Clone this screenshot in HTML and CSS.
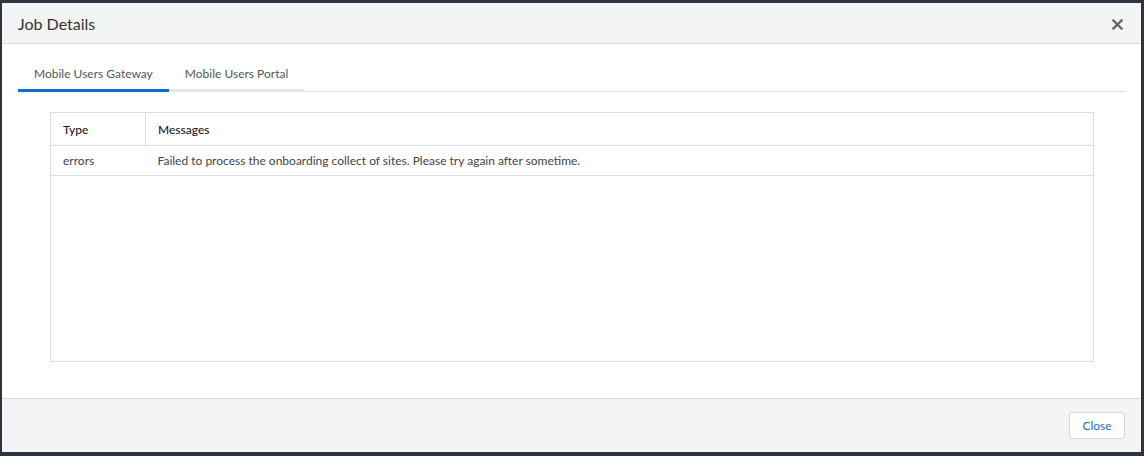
FILE: index.html
```html
<!DOCTYPE html>
<html>
<head>
<meta charset="utf-8">
<link rel="stylesheet" href="styles.css">
</head>
<body>
<div class="modal">
  <div class="modal-header">
    <h1 class="modal-title">Job Details</h1>
    <button class="close-x" aria-label="Close">
      <svg width="11" height="11" viewBox="0 0 11 11"><path d="M1.5 1.5 L9.5 9.5 M9.5 1.5 L1.5 9.5" stroke="#666" stroke-width="2.4" stroke-linecap="square"/></svg>
    </button>
  </div>
  <div class="modal-body">
    <div class="tabs">
      <div class="tab active">Mobile Users Gateway</div>
      <div class="tab">Mobile Users Portal</div>
      <div class="tab-rest"></div>
    </div>
    <div class="grid-box">
      <table class="grid">
        <thead>
          <tr><th class="col-type">Type</th><th>Messages</th></tr>
        </thead>
        <tbody>
          <tr><td class="col-type">errors</td><td>Failed to process the onboarding collect of sites. Please try again after sometime.</td></tr>
        </tbody>
      </table>
    </div>
  </div>
  <div class="modal-footer">
    <button class="btn">Close</button>
  </div>
</div>
</body>
</html>
```
FILE: styles.css
```css
html, body {
  margin: 0;
  padding: 0;
  background: #2c3341;
  font-family: Lato, "Open Sans", sans-serif;
}
body {
  padding: 3px 3px 4px 2px;
  height: 456px;
  box-sizing: border-box;
}
.modal {
  background: #fff;
  height: 449px;
  display: flex;
  flex-direction: column;
}
.modal-header {
  height: 40px;
  background: #f3f4f4;
  border-bottom: 1px solid #dcdcdc;
  display: flex;
  align-items: center;
  justify-content: space-between;
  padding: 0 16px 0 16px;
}
.modal-title {
  margin: 0;
  font-size: 16px;
  font-weight: 400;
  color: #333;
}
.close-x {
  background: none;
  border: 0;
  padding: 0;
  width: 11px;
  height: 11px;
  display: flex;
  margin-right: 2px;
  margin-top: 2px;
}
.modal-body {
  flex: 1;
  padding: 21px 15px 0 16px;
}
.tabs {
  display: flex;
  align-items: flex-end;
}
.tab {
  padding: 0 16px;
  font-size: 12px;
  line-height: 18px;
  color: #555;
  height: 24px;
  border-bottom: 3px solid #e6e7e7;
}
.tab.active {
  border-bottom-color: #0a6fd1;
}
.tab-rest {
  flex: 1;
  border-bottom: 1px solid #dcdcdc;
}
.grid-box {
  margin: 20px 32px 0 32px;
  border: 1px solid #dcdcdc;
  height: 248px;
}
.grid {
  width: 100%;
  border-collapse: collapse;
  font-size: 12px;
}
.grid th {
  text-align: left;
  font-weight: 500;
  color: #222;
  height: 32px;
  padding: 0 12px;
  border-bottom: 1px solid #dcdcdc;
}
.grid td {
  color: #444;
  height: 29px;
  padding: 0 12px;
  border-bottom: 1px solid #dcdcdc;
}
.grid .col-type {
  width: 70px;
  border-right: 1px solid #dcdcdc;
}
.grid td.col-type {
  border-right: 0;
}
.modal-footer {
  height: 53px;
  background: #f3f4f4;
  border-top: 1px solid #dcdcdc;
  display: flex;
  align-items: center;
  justify-content: flex-end;
  padding: 0 16px;
}
.btn {
  font-family: Lato, sans-serif;
  font-size: 12px;
  color: #1f6bd0;
  background: #fff;
  border: 1px solid #d6d6d6;
  border-radius: 3px;
  width: 56px;
  height: 27px;
  padding: 0;
}
```
